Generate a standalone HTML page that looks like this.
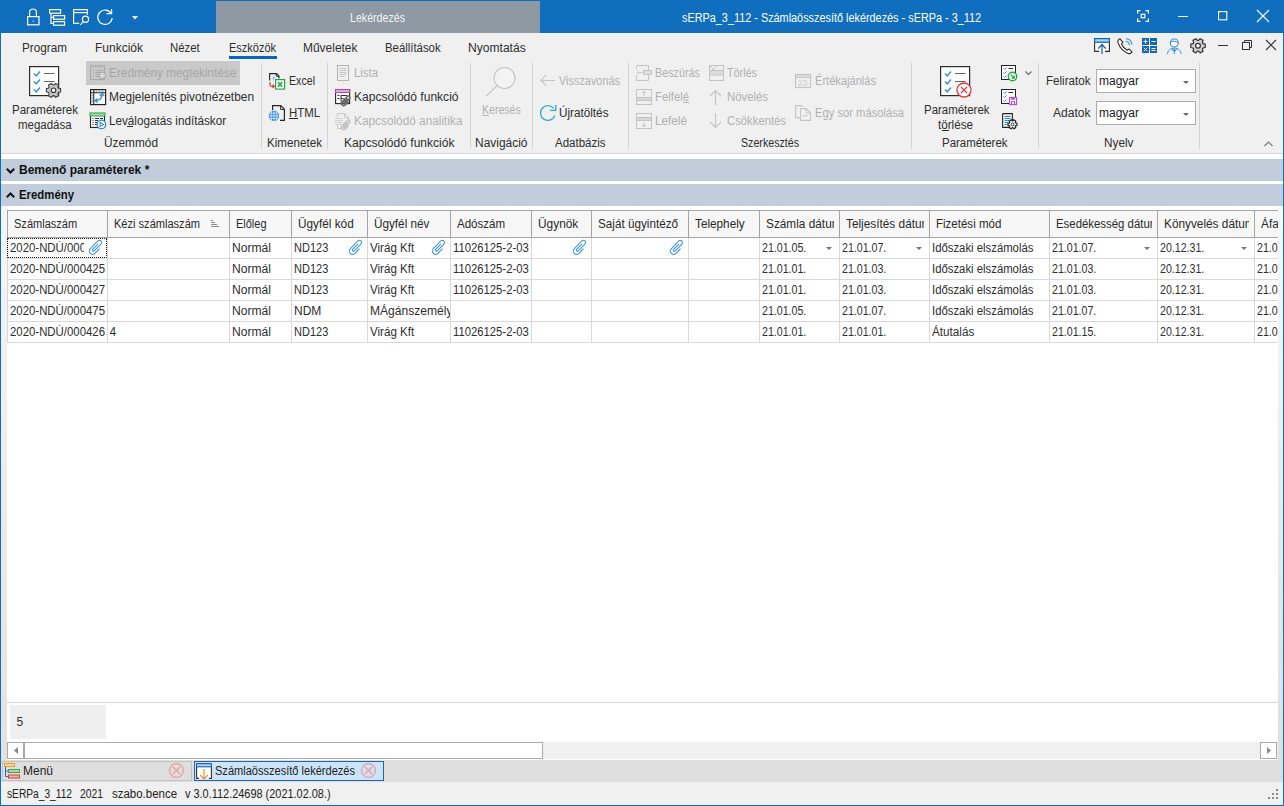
<!DOCTYPE html><html><head><meta charset="utf-8"><style>
html,body{margin:0;padding:0;}
body{width:1284px;height:806px;position:relative;overflow:hidden;background:#f0f0f0;font-family:"Liberation Sans",sans-serif;}
.t{position:absolute;white-space:nowrap;line-height:14px;font-size:12px;}
svg{overflow:visible}
</style></head><body>
<div style="position:absolute;left:0px;top:0px;width:1284px;height:806px;background:#106ebe"></div>
<div style="position:absolute;left:1px;top:33px;width:1282px;height:772px;background:#f0f0f0"></div>
<div style="position:absolute;left:216px;top:1px;width:324px;height:32px;background:#8e99a3"></div>
<div class="t" style="left:350px;top:11.0px;font-size:12px;color:#f4f4f4;transform:scaleX(0.8866);transform-origin:0 0;">Lekérdezés</div>
<div class="t" style="left:682px;top:11.0px;font-size:12px;color:#ffffff;transform:scaleX(0.9052);transform-origin:0 0;">sERPa_3_112 - Számlaösszesítő lekérdezés - sERPa - 3_112</div>
<svg style="position:absolute;left:27px;top:8px;" width="13" height="18" viewBox="0 0 13 18"><path d="M2.6 8.6V4.6a3.4 3.6 0 0 1 6.8 0V8.6" fill="none" stroke="#ffffff" stroke-width="1.2"/><rect x="0.6" y="8.6" width="11.4" height="8.2" fill="none" stroke="#ffffff" stroke-width="1.2"/><rect x="5.6" y="12.6" width="1.4" height="1.4" fill="#9cc3ea"/></svg>
<svg style="position:absolute;left:49px;top:9px;" width="17" height="17" viewBox="0 0 17 17"><rect x="0.6" y="0.6" width="11" height="3.6" fill="none" stroke="#ffffff" stroke-width="1.2"/><rect x="4.6" y="6.6" width="11" height="3.6" fill="none" stroke="#ffffff" stroke-width="1.2"/><rect x="4.6" y="12.6" width="11" height="3.6" fill="none" stroke="#ffffff" stroke-width="1.2"/><path d="M2 4.5V14.4H4.6M2 8.4H4.6" fill="none" stroke="#ffffff" stroke-width="1.2"/></svg>
<svg style="position:absolute;left:73px;top:9px;" width="17" height="18" viewBox="0 0 17 18"><path d="M6.2 14.4H0.6V0.6H14.4V5.8" fill="none" stroke="#ffffff" stroke-width="1.2"/><path d="M0.6 3.6H14.4" stroke="#ffffff" stroke-width="1.2"/><circle cx="12.5" cy="10.2" r="3.1" fill="none" stroke="#ffffff" stroke-width="1.2"/><path d="M10.3 12.6L7.2 16" stroke="#ffffff" stroke-width="1.1"/></svg>
<svg style="position:absolute;left:97px;top:9px;" width="17" height="17" viewBox="0 0 17 17"><path d="M14.2 4.5A7.2 7.2 0 1 0 15.2 9" fill="none" stroke="#ffffff" stroke-width="1.2"/><path d="M9.5 4.6H14.6V0" fill="none" stroke="#ffffff" stroke-width="1.2"/></svg>
<svg style="position:absolute;left:132px;top:16px;" width="7" height="4" viewBox="0 0 7 4"><path d="M0 0H6L3 3.5Z" fill="#ffffff"/></svg>
<svg style="position:absolute;left:1137px;top:10px;" width="12" height="12" viewBox="0 0 12 12"><path d="M0.6 3.5V0.6H3.5M8.5 0.6H11.4V3.5M11.4 8.5V11.4H8.5M3.5 11.4H0.6V8.5" fill="none" stroke="#ffffff" stroke-width="1.2"/><rect x="4.2" y="4.2" width="3.6" height="3.6" fill="none" stroke="#ffffff" stroke-width="1.2"/></svg>
<div style="position:absolute;left:1178px;top:16px;width:10px;height:1px;background:#ffffff"></div>
<svg style="position:absolute;left:1218px;top:11px;" width="10" height="10" viewBox="0 0 10 10"><rect x="0.6" y="0.6" width="8.2" height="8.2" fill="none" stroke="#ffffff" stroke-width="1.1"/></svg>
<svg style="position:absolute;left:1257px;top:10px;" width="12" height="12" viewBox="0 0 12 12"><path d="M0 0L12 12M12 0L0 12" stroke="#ffffff" stroke-width="1.1"/></svg>
<div class="t" style="left:22px;top:41.0px;font-size:12px;color:#2e2e2e;transform:scaleX(0.9779);transform-origin:0 0;">Program</div>
<div class="t" style="left:95px;top:41.0px;font-size:12px;color:#2e2e2e;transform:scaleX(0.9997);transform-origin:0 0;">Funkciók</div>
<div class="t" style="left:170px;top:41.0px;font-size:12px;color:#2e2e2e;transform:scaleX(0.9444);transform-origin:0 0;">Nézet</div>
<div class="t" style="left:229px;top:41.0px;font-size:12px;color:#2e2e2e;transform:scaleX(0.9154);transform-origin:0 0;">Eszközök</div>
<div class="t" style="left:303px;top:41.0px;font-size:12px;color:#2e2e2e;transform:scaleX(0.9966);transform-origin:0 0;">Műveletek</div>
<div class="t" style="left:385px;top:41.0px;font-size:12px;color:#2e2e2e;transform:scaleX(0.9474);transform-origin:0 0;">Beállítások</div>
<div class="t" style="left:468px;top:41.0px;font-size:12px;color:#2e2e2e;transform:scaleX(1.0062);transform-origin:0 0;">Nyomtatás</div>
<div style="position:absolute;left:229px;top:56px;width:48px;height:3px;background:#0864c0"></div>
<svg style="position:absolute;left:1094px;top:38px;" width="17" height="17" viewBox="0 0 17 17"><path d="M5 13.4H0.6V1H15.4V13.4H11" fill="#fff" stroke="#2b2b2b" stroke-width="1.1"/><rect x="0.6" y="0.6" width="14.8" height="3.6" fill="#a7d8f7" stroke="#0f5fb8" stroke-width="1.2"/><path d="M8 16V6.5M4.2 10.6L8 6.5L11.8 10.6" fill="none" stroke="#0f5fb8" stroke-width="1.2"/></svg>
<svg style="position:absolute;left:1117px;top:38px;" width="17" height="17" viewBox="0 0 17 17"><path d="M3 0.8C1.6 1.4 0.4 2.8 1.1 4.9C2.8 9.6 6.2 13.4 11 15.4C12.6 16 14.2 15.2 14.9 13.9L12.2 11L10.2 12.2C7.9 10.9 5.6 8.6 4.5 6.3L5.9 4.3Z" fill="#fff" stroke="#2b2b2b" stroke-width="1.1" stroke-linejoin="round"/><path d="M8.6 3.2A4.2 4.2 0 0 1 12.4 7.2M9 0.8A6.6 6.6 0 0 1 15 6.6" fill="none" stroke="#2e8fd6" stroke-width="1.1"/></svg>
<svg style="position:absolute;left:1142px;top:38px;" width="15" height="15" viewBox="0 0 15 15"><rect x="0" y="0" width="7" height="7" fill="#1565c0"/><rect x="8" y="0" width="7" height="7" fill="#1565c0"/><rect x="0" y="8" width="7" height="7" fill="#1565c0"/><rect x="8" y="8" width="7" height="7" fill="#1565c0"/><path d="M1.5 3.5H5.5M3.5 1.5V5.5M9.5 3.5H13.5M1.8 9.8L5.2 13.2M5.2 9.8L1.8 13.2M9.5 10.5H13.5M9.5 12.5H13.5" stroke="#fff" stroke-width="1"/></svg>
<svg style="position:absolute;left:1167px;top:38px;" width="15" height="17" viewBox="0 0 15 17"><circle cx="7.3" cy="5" r="4" fill="#fff" stroke="#2e8fd6" stroke-width="1.1"/><path d="M3.6 3.8C5.5 2.6 8.5 3.4 11 4.4" fill="none" stroke="#2e8fd6" stroke-width="1"/><path d="M0.5 16C1 12 3.5 10.2 7.3 10.2C11.1 10.2 13.6 12 14.1 16M7.3 11V16M5.2 10.8L6.3 13.2L7.3 11.6L8.3 13.2L9.4 10.8" fill="none" stroke="#2e8fd6" stroke-width="1"/></svg>
<svg style="position:absolute;left:1190px;top:38px;" width="17" height="17" viewBox="0 0 17 17"><path d="M12.93 5.60 L15.21 6.14 L15.21 9.46 L12.93 10.00 L12.37 10.97 L13.05 13.21 L10.16 14.88 L8.56 13.17 L7.44 13.17 L5.84 14.88 L2.95 13.21 L3.63 10.97 L3.07 10.00 L0.79 9.46 L0.79 6.14 L3.07 5.60 L3.63 4.63 L2.95 2.39 L5.84 0.72 L7.44 2.43 L8.56 2.43 L10.16 0.72 L13.05 2.39 L12.37 4.63Z" fill="#d0d0d0" stroke="#333" stroke-width="1.2" stroke-linejoin="round"/><circle cx="8" cy="7.8" r="2.4" fill="#fff" stroke="#333" stroke-width="1.2"/></svg>
<div style="position:absolute;left:1218px;top:45px;width:10px;height:1px;background:#333"></div>
<svg style="position:absolute;left:1242px;top:40px;" width="11" height="10" viewBox="0 0 11 10"><rect x="0.5" y="2.5" width="7" height="7" fill="none" stroke="#333" stroke-width="1"/><path d="M2.5 2.5V0.5H9.5V7.5H7.5" fill="none" stroke="#333" stroke-width="1"/></svg>
<svg style="position:absolute;left:1266px;top:40px;" width="10" height="10" viewBox="0 0 10 10"><path d="M0 0L10 10M10 0L0 10" stroke="#333" stroke-width="1.1"/></svg>
<div style="position:absolute;left:261px;top:63px;width:1px;height:86px;background:#d4d4d4"></div>
<div style="position:absolute;left:327px;top:63px;width:1px;height:86px;background:#d4d4d4"></div>
<div style="position:absolute;left:470px;top:63px;width:1px;height:86px;background:#d4d4d4"></div>
<div style="position:absolute;left:532px;top:63px;width:1px;height:86px;background:#d4d4d4"></div>
<div style="position:absolute;left:628px;top:63px;width:1px;height:86px;background:#d4d4d4"></div>
<div style="position:absolute;left:911px;top:63px;width:1px;height:86px;background:#d4d4d4"></div>
<div style="position:absolute;left:1038px;top:63px;width:1px;height:86px;background:#d4d4d4"></div>
<div style="position:absolute;left:1199px;top:63px;width:1px;height:86px;background:#d4d4d4"></div>
<div style="position:absolute;left:1px;top:153px;width:1282px;height:1px;background:#d9d9d9"></div>
<div class="t" style="left:104px;top:136.0px;font-size:12px;color:#2e2e2e;transform:scaleX(0.9874);transform-origin:0 0;">Üzemmód</div>
<div class="t" style="left:266.5px;top:136.0px;font-size:12px;color:#2e2e2e;transform:scaleX(0.9702);transform-origin:0 0;">Kimenetek</div>
<div class="t" style="left:343.5px;top:136.0px;font-size:12px;color:#2e2e2e;transform:scaleX(1.0041);transform-origin:0 0;">Kapcsolódó funkciók</div>
<div class="t" style="left:475px;top:136.0px;font-size:12px;color:#2e2e2e;transform:scaleX(0.9961);transform-origin:0 0;">Navigáció</div>
<div class="t" style="left:555px;top:136.0px;font-size:12px;color:#2e2e2e;transform:scaleX(0.9585);transform-origin:0 0;">Adatbázis</div>
<div class="t" style="left:741px;top:136.0px;font-size:12px;color:#2e2e2e;transform:scaleX(0.8876);transform-origin:0 0;">Szerkesztés</div>
<div class="t" style="left:942px;top:136.0px;font-size:12px;color:#2e2e2e;transform:scaleX(0.9536);transform-origin:0 0;">Paraméterek</div>
<div class="t" style="left:1104px;top:136.0px;font-size:12px;color:#2e2e2e;transform:scaleX(0.9828);transform-origin:0 0;">Nyelv</div>
<svg style="position:absolute;left:29px;top:66px;" width="31" height="31" viewBox="0 0 31 31"><rect x="0.6" y="0.6" width="29" height="29" fill="#fff" stroke="#2b2b2b" stroke-width="1.2"/><path d="M5 7.5L7.3 9.8L11 5.5M5 15.5L7.3 17.8L11 13.5M5 23.5L7.3 25.8L11 21.5" fill="none" stroke="#3a98d8" stroke-width="1.5"/><path d="M15 7.5H25.5M15 15.5H25.5" stroke="#666" stroke-width="1.1"/></svg>
<svg style="position:absolute;left:45px;top:82px;" width="18" height="18" viewBox="0 0 18 18"><path d="M13.43 6.10 L15.61 6.66 L15.61 9.94 L13.43 10.50 L12.87 11.47 L13.48 13.64 L10.63 15.28 L9.06 13.67 L7.94 13.67 L6.37 15.28 L3.52 13.64 L4.13 11.47 L3.57 10.50 L1.39 9.94 L1.39 6.66 L3.57 6.10 L4.13 5.13 L3.52 2.96 L6.37 1.32 L7.94 2.93 L9.06 2.93 L10.63 1.32 L13.48 2.96 L12.87 5.13Z" fill="#c8c8c8" stroke="#3a3a3a" stroke-width="1.1"/><circle cx="8.5" cy="8.3" r="2.3" fill="#fff" stroke="#3a3a3a" stroke-width="1.2"/></svg>
<div class="t" style="left:12px;top:103.0px;font-size:12px;color:#2e2e2e;transform:scaleX(0.9609);transform-origin:0 0;">Paraméterek</div>
<div class="t" style="left:18px;top:118.0px;font-size:12px;color:#2e2e2e;transform:scaleX(0.9566);transform-origin:0 0;">megadása</div>
<div style="position:absolute;left:86px;top:61px;width:154px;height:24px;background:#c9c9c9"></div>
<svg style="position:absolute;left:90px;top:65px;" width="16" height="17" viewBox="0 0 16 17"><rect x="0.5" y="0.5" width="14" height="14" fill="none" stroke="#a8a8a8"/><rect x="0.5" y="0.5" width="14" height="2" fill="#b8b8b8"/><path d="M3 5.5H4M3 7.5H4M3 9.5H4M3 11.5H4M5.5 5.5H13M5.5 7.5H11M5.5 9.5H9M5.5 11.5H9" stroke="#a8a8a8"/><circle cx="12.3" cy="10.4" r="3.2" fill="#d6d6d6" stroke="#a8a8a8"/><path d="M10.2 12.6L7.6 15.4" stroke="#b4b4b4" stroke-width="1.1"/></svg>
<div class="t" style="left:109px;top:66.0px;font-size:12px;color:#a6a6a6;transform:scaleX(0.9855);transform-origin:0 0;">Eredmény megtekintése</div>
<svg style="position:absolute;left:90px;top:89px;" width="17" height="17" viewBox="0 0 17 17"><rect x="0.6" y="0.6" width="15" height="15" fill="#fff" stroke="#222" stroke-width="1.2"/><path d="M1 3.8H15M3.8 1V15" stroke="#222" stroke-width="1.1"/><path d="M5.5 2.2H7.5M8.5 2.2H10.5M11.5 2.2H13.5M2.2 5.5V7.5M2.2 8.5V10.5M2.2 11.5V13.5" stroke="#9a9a9a" stroke-width="1.2"/><path d="M5.6 11.6C8.5 11.6 11.5 10 12 6" fill="none" stroke="#2e8fd6" stroke-width="1.3"/><path d="M9.8 7L12 4.5L14.2 7M7.5 9.6L5.2 11.6L7.5 13.6" fill="none" stroke="#2e8fd6" stroke-width="1.3"/></svg>
<div class="t" style="left:109px;top:90.0px;font-size:12px;color:#2e2e2e;transform:scaleX(0.9927);transform-origin:0 0;">Megjelenítés pivotnézetben</div>
<svg style="position:absolute;left:90px;top:113px;" width="17" height="17" viewBox="0 0 17 17"><rect x="0.5" y="0.5" width="14" height="14" fill="#fff" stroke="#262626" stroke-width="1.1"/><rect x="0" y="0" width="15" height="3" fill="#9fdcaa" stroke="#27a844" stroke-width="1"/><path d="M2.5 5.5H3.5M2.5 7.5H3.5M2.5 9.5H3.5M2.5 11.5H3.5M5 5.5H9M10 5.5H13M5 7.5H8M5 9.5H7M5 11.5H7" stroke="#333"/><circle cx="11.4" cy="11.4" r="4.3" fill="#fff" stroke="#2e8fd6" stroke-width="1.3"/><path d="M10.1 9.2V13.6L13.6 11.4Z" fill="none" stroke="#2e8fd6" stroke-width="1.1"/></svg>
<div class="t" style="left:109px;top:114.0px;font-size:12px;color:#2e2e2e;transform:scaleX(0.9746);transform-origin:0 0;">Leválogatás indításkor</div>
<div style="position:absolute;left:127px;top:126px;width:6px;height:1px;background:#2e2e2e"></div>
<svg style="position:absolute;left:269px;top:72px;" width="17" height="18" viewBox="0 0 17 18"><path d="M0.6 8.5V1.6H7.5L10 4.1V6.5" fill="none" stroke="#262626" stroke-width="1.1"/><path d="M7.3 1.6V4.3H10" fill="none" stroke="#262626" stroke-width="0.9"/><path d="M3.5 5.2H6M4.7 5.2V8.2M3.5 6.6H5.8" stroke="#8cc0ee" stroke-width="1"/><rect x="6.6" y="7.6" width="9" height="9.5" fill="#fff" stroke="#21a84a" stroke-width="1.2"/><path d="M9 10L13.2 14.8M13.2 10L9 14.8" stroke="#21a84a" stroke-width="1.5"/><path d="M1 10V12.5C1 13.6 1.8 14.3 3 14.3H5M3.6 12.6L5.3 14.3L3.6 16" fill="none" stroke="#e53935" stroke-width="1.2"/></svg>
<div class="t" style="left:288.5px;top:74.0px;font-size:12px;color:#2e2e2e;transform:scaleX(0.8860);transform-origin:0 0;">Excel</div>
<svg style="position:absolute;left:268px;top:105px;" width="18" height="17" viewBox="0 0 18 17"><path d="M4.6 5V0.6H12.8L16.4 4.2V15.4H12" fill="none" stroke="#262626" stroke-width="1.2"/><path d="M12.6 0.6V4.4H16.4" fill="none" stroke="#262626" stroke-width="1"/><circle cx="6" cy="10.8" r="5.2" fill="#2a88d4"/><path d="M0.8 10.8H11.2M6 5.6V16M1.8 8.2H10.2M1.8 13.4H10.2M3.6 6.2C2.9 9 2.9 12.6 3.6 15.4M8.4 6.2C9.1 9 9.1 12.6 8.4 15.4" fill="none" stroke="#fff" stroke-width="0.75" opacity="0.9"/></svg>
<div class="t" style="left:288.5px;top:106.0px;font-size:12px;color:#2e2e2e;transform:scaleX(0.9488);transform-origin:0 0;">HTML</div>
<div style="position:absolute;left:289px;top:118px;width:9px;height:1px;background:#262626"></div>
<svg style="position:absolute;left:337px;top:65px;" width="13" height="17" viewBox="0 0 13 17"><rect x="0.5" y="0.5" width="11" height="15" fill="none" stroke="#b4b4b4"/><path d="M2.5 3.5H9.5M2.5 5.5H9.5M2.5 7.5H9.5M2.5 9.5H9.5M2.5 11.5H7.5" stroke="#c4c4c4"/></svg>
<div class="t" style="left:354.3px;top:66.0px;font-size:12px;color:#b0b0b0;transform:scaleX(0.9470);transform-origin:0 0;">Lista</div>
<svg style="position:absolute;left:335px;top:89px;" width="17" height="17" viewBox="0 0 17 17"><rect x="0.6" y="0.6" width="14" height="14" fill="#fff" stroke="#262626" stroke-width="1.1"/><rect x="0.5" y="0.5" width="14.2" height="3" fill="#dcb0dc" stroke="#a24ea8" stroke-width="1"/><path d="M2.5 6.5H4.5M2.5 9.5H4.5M6 6.5H12M6 9.5H8.5M6 6.5V12.5H8" fill="none" stroke="#333" stroke-width="1"/><g transform="translate(11.4,11.6) rotate(45) scale(0.75)"><path d="M3 -1V5A3 3 0 0 1 -3 5V-4.8A2 2 0 0 1 1 -4.8V3.8A1 1 0 0 1 -1 3.8V-3" fill="none" stroke="#6a6a6a" stroke-width="2.2"/></g></svg>
<div class="t" style="left:354.3px;top:90.0px;font-size:12px;color:#2e2e2e;transform:scaleX(1.0044);transform-origin:0 0;">Kapcsolódó funkció</div>
<svg style="position:absolute;left:335px;top:113px;" width="17" height="17" viewBox="0 0 17 17"><path d="M2.5 4V0.6H9.5L13.5 4.6V8M2.5 12V15.4H6" fill="none" stroke="#c8c8c8" stroke-width="1"/><path d="M9.5 0.6V4.6H13.5" fill="none" stroke="#c8c8c8"/><path d="M0 5.5H8M0 7.5H8M0 9.5H8M0 11.5H6" stroke="#d0d0d0"/><g transform="translate(11.4,11.6) rotate(45) scale(0.75)"><path d="M3 -1V5A3 3 0 0 1 -3 5V-4.8A2 2 0 0 1 1 -4.8V3.8A1 1 0 0 1 -1 3.8V-3" fill="none" stroke="#c4c4c4" stroke-width="2.2"/></g></svg>
<div class="t" style="left:354.3px;top:114.0px;font-size:12px;color:#b0b0b0;transform:scaleX(0.9858);transform-origin:0 0;">Kapcsolódó analitika</div>
<svg style="position:absolute;left:485px;top:66px;" width="31" height="31" viewBox="0 0 31 31"><circle cx="19.5" cy="12" r="10.5" fill="#f3f3f3" stroke="#c6c6c6" stroke-width="1.15"/><path d="M12.2 19.5L1.2 30.2" stroke="#c6c6c6" stroke-width="1.15"/></svg>
<div class="t" style="left:482px;top:103.0px;font-size:12px;color:#b0b0b0;transform:scaleX(0.8792);transform-origin:0 0;">Keresés</div>
<div style="position:absolute;left:482px;top:115px;width:7px;height:1px;background:#b8b8b8"></div>
<svg style="position:absolute;left:540px;top:72px;" width="16" height="16" viewBox="0 0 16 16"><path d="M15 8.4H0.8M6.3 2.9L0.8 8.4L6.3 13.9" fill="none" stroke="#c4c4c4" stroke-width="1.05"/></svg>
<div class="t" style="left:559.4px;top:74.0px;font-size:12px;color:#b0b0b0;transform:scaleX(0.9085);transform-origin:0 0;">Visszavonás</div>
<svg style="position:absolute;left:540px;top:104px;" width="17" height="17" viewBox="0 0 17 17"><path d="M13.57 4.24A7.4 7.4 0 1 0 14.85 11.53" fill="none" stroke="#2aaec8" stroke-width="1.35"/><path d="M10 6.4H15.8V1" fill="none" stroke="#2aaec8" stroke-width="1.35"/></svg>
<div class="t" style="left:559.4px;top:106.0px;font-size:12px;color:#2e2e2e;transform:scaleX(0.9766);transform-origin:0 0;">Újratöltés</div>
<svg style="position:absolute;left:636px;top:65px;" width="17" height="17" viewBox="0 0 17 17"><path d="M0.5 4V0.5H12.5V5M0.5 10V15.5H12.5V10" fill="none" stroke="#c4c4c4"/><rect x="7.5" y="5.5" width="8" height="4" fill="#dedede" stroke="#c4c4c4"/><path d="M1 7.5H7M3 5.5L1 7.5L3 9.5" fill="none" stroke="#d0d0d0"/></svg>
<div class="t" style="left:655.3px;top:66.0px;font-size:12px;color:#b0b0b0;transform:scaleX(0.8997);transform-origin:0 0;">Beszúrás</div>
<svg style="position:absolute;left:636px;top:89px;" width="17" height="17" viewBox="0 0 17 17"><rect x="0.5" y="0.5" width="15" height="15" fill="none" stroke="#c4c4c4"/><rect x="0.5" y="8.5" width="15" height="3" fill="#d8d8d8" stroke="#c4c4c4"/><path d="M8 7V2M6 4L8 2L10 4" fill="none" stroke="#c4c4c4"/></svg>
<div class="t" style="left:655.3px;top:90.0px;font-size:12px;color:#b0b0b0;transform:scaleX(0.9440);transform-origin:0 0;">Felfelé</div>
<div style="position:absolute;left:683px;top:102px;width:6px;height:1px;background:#b8b8b8"></div>
<svg style="position:absolute;left:636px;top:113px;" width="17" height="17" viewBox="0 0 17 17"><rect x="0.5" y="0.5" width="15" height="15" fill="none" stroke="#c4c4c4"/><rect x="0.5" y="4.5" width="15" height="3" fill="#d8d8d8" stroke="#c4c4c4"/><path d="M8 9V14M6 12L8 14L10 12" fill="none" stroke="#c4c4c4"/></svg>
<div class="t" style="left:655.3px;top:114.0px;font-size:12px;color:#b0b0b0;transform:scaleX(0.9790);transform-origin:0 0;">Lefelé</div>
<svg style="position:absolute;left:709px;top:65px;" width="16" height="17" viewBox="0 0 16 17"><rect x="0.5" y="0.5" width="14" height="15" fill="none" stroke="#c4c4c4"/><rect x="0.5" y="5.5" width="14" height="4.5" fill="#dedede" stroke="#c4c4c4"/><path d="M0.5 0.5L8 8M8 0.5L0.5 8" stroke="#c8c8c8"/></svg>
<div class="t" style="left:727.4px;top:66.0px;font-size:12px;color:#b0b0b0;transform:scaleX(0.8997);transform-origin:0 0;">Törlés</div>
<svg style="position:absolute;left:709px;top:89px;" width="16" height="17" viewBox="0 0 16 17"><path d="M6.5 16V1.5M1 7L6.5 1.5L12 7" fill="none" stroke="#c4c4c4" stroke-width="1.1"/></svg>
<div class="t" style="left:727.4px;top:90.0px;font-size:12px;color:#b0b0b0;transform:scaleX(0.9456);transform-origin:0 0;">Növelés</div>
<svg style="position:absolute;left:709px;top:113px;" width="16" height="17" viewBox="0 0 16 17"><path d="M6.5 0V14.5M1 9L6.5 14.5L12 9" fill="none" stroke="#c4c4c4" stroke-width="1.1"/></svg>
<div class="t" style="left:727.4px;top:114.0px;font-size:12px;color:#b0b0b0;transform:scaleX(0.9412);transform-origin:0 0;">Csökkentés</div>
<svg style="position:absolute;left:795px;top:74px;" width="17" height="15" viewBox="0 0 17 15"><rect x="0.5" y="0.5" width="15" height="13" fill="none" stroke="#c4c4c4" stroke-width="1.1"/><rect x="0.5" y="0.5" width="15" height="2.8" fill="#dcdcdc" stroke="#c4c4c4" stroke-width="1"/><text x="2.6" y="12" font-size="9" font-family="Liberation Sans" fill="#cdcdcd">23</text></svg>
<div class="t" style="left:814.5px;top:74.0px;font-size:12px;color:#b0b0b0;transform:scaleX(0.9238);transform-origin:0 0;">Értékajánlás</div>
<svg style="position:absolute;left:795px;top:105px;" width="17" height="17" viewBox="0 0 17 17"><path d="M5 12.6H0.6V0.6H6.5L7.8 1.8" fill="none" stroke="#c4c4c4" stroke-width="1.1"/><path d="M5.6 3.6H11L15.4 8V15.4H5.6Z" fill="#f3f3f3" stroke="#c4c4c4" stroke-width="1.1"/><path d="M11 3.6V8H15.4" fill="none" stroke="#c4c4c4"/><path d="M7.5 10.8H13" stroke="#c4c4c4"/></svg>
<div class="t" style="left:814.5px;top:106.0px;font-size:12px;color:#b0b0b0;transform:scaleX(0.9333);transform-origin:0 0;">Egy sor másolása</div>
<svg style="position:absolute;left:940px;top:66px;" width="31" height="31" viewBox="0 0 31 31"><rect x="0.6" y="0.6" width="29" height="29" fill="#fff" stroke="#2b2b2b" stroke-width="1.2"/><path d="M5 7.5L7.3 9.8L11 5.5M5 15.5L7.3 17.8L11 13.5M5 23.5L7.3 25.8L11 21.5" fill="none" stroke="#3a98d8" stroke-width="1.5"/><path d="M15 7.5H25.5M15 15.5H25.5" stroke="#666" stroke-width="1.1"/></svg>
<svg style="position:absolute;left:956px;top:82px;" width="16" height="16" viewBox="0 0 16 16"><circle cx="8" cy="8" r="7" fill="#fff" stroke="#e53935" stroke-width="1.3"/><path d="M5 5L11 11M11 5L5 11" stroke="#e53935" stroke-width="1.3"/></svg>
<div class="t" style="left:923.5px;top:103.0px;font-size:12px;color:#2e2e2e;transform:scaleX(0.9536);transform-origin:0 0;">Paraméterek</div>
<div class="t" style="left:938px;top:117.5px;font-size:12px;color:#2e2e2e;transform:scaleX(0.9718);transform-origin:0 0;">törlése</div>
<div style="position:absolute;left:942px;top:130px;width:7px;height:1px;background:#2e2e2e"></div>
<svg style="position:absolute;left:1001px;top:65px;" width="17" height="17" viewBox="0 0 17 17"><rect x="0.5" y="0.5" width="14" height="14" fill="#fff" stroke="#262626"/><path d="M2.5 3.5L3.5 4.5L5.5 2.5M2.5 7.5L3.5 8.5L5.5 6.5M2.5 11.5L3.5 12.5L5.5 10.5" fill="none" stroke="#2e8fd6" stroke-width="1"/><path d="M7.5 3.5H12" stroke="#333"/><circle cx="11.5" cy="11.5" r="4.2" fill="#fff" stroke="#21a84a" stroke-width="1.4"/><path d="M9.6 9.6L13 13M13.2 10.6V13.2H10.6" fill="none" stroke="#21a84a" stroke-width="1.3"/></svg>
<svg style="position:absolute;left:1001px;top:89px;" width="17" height="17" viewBox="0 0 17 17"><rect x="0.5" y="0.5" width="14" height="14" fill="#fff" stroke="#262626"/><path d="M2.5 3.5L3.5 4.5L5.5 2.5M2.5 7.5L3.5 8.5L5.5 6.5M2.5 11.5L3.5 12.5L5.5 10.5" fill="none" stroke="#2e8fd6" stroke-width="1"/><path d="M7.5 3.5H12" stroke="#333"/><rect x="8.5" y="8.5" width="7" height="7" fill="#fff" stroke="#b455c8" stroke-width="1.3"/><rect x="10.2" y="8.5" width="3.6" height="2.3" fill="#b455c8"/><rect x="10.5" y="12.6" width="3" height="2.9" fill="none" stroke="#b455c8" stroke-width="1"/></svg>
<svg style="position:absolute;left:1002px;top:113px;" width="17" height="17" viewBox="0 0 17 17"><path d="M0.6 0.6H10.4V7M7 14.4H0.6V0.6" fill="none" stroke="#262626" stroke-width="1.1"/><path d="M2.5 3.5H8.5M2.5 5.5H8.5M2.5 7.5H7M2.5 9.5H6M2.5 11.5H5" stroke="#2e8fd6"/><path d="M13.47 9.85 L14.96 10.19 L14.96 12.41 L13.47 12.75 L13.24 13.15 L13.70 14.61 L11.77 15.72 L10.73 14.59 L10.27 14.59 L9.23 15.72 L7.30 14.61 L7.76 13.15 L7.53 12.75 L6.04 12.41 L6.04 10.19 L7.53 9.85 L7.76 9.45 L7.30 7.99 L9.23 6.88 L10.27 8.01 L10.73 8.01 L11.77 6.88 L13.70 7.99 L13.24 9.45Z" fill="#fff" stroke="#262626" stroke-width="1.2"/><circle cx="10.5" cy="11.3" r="1.4" fill="#fff" stroke="#262626" stroke-width="0.9"/></svg>
<svg style="position:absolute;left:1025px;top:71px;" width="7" height="4" viewBox="0 0 7 4"><path d="M0.5 0.5L3.5 3.5L6.5 0.5" fill="none" stroke="#6a6a6a" stroke-width="1.1"/></svg>
<div class="t" style="left:1046.3px;top:74.0px;font-size:12px;color:#2e2e2e;transform:scaleX(0.9671);transform-origin:0 0;">Feliratok</div>
<div class="t" style="left:1053.4px;top:106.0px;font-size:12px;color:#2e2e2e;transform:scaleX(1.0042);transform-origin:0 0;">Adatok</div>
<div style="position:absolute;left:1096px;top:69px;width:100px;height:24px;background:#fff;border:1px solid #acacac;box-sizing:border-box"></div>
<div class="t" style="left:1099.4px;top:73.5px;font-size:12px;color:#202020;transform:scaleX(0.9996);transform-origin:0 0;">magyar</div>
<svg style="position:absolute;left:1183px;top:81px;" width="6" height="3" viewBox="0 0 6 3"><path d="M0 0H6L3 3Z" fill="#6a6a6a"/></svg>
<div style="position:absolute;left:1096px;top:101px;width:100px;height:24px;background:#fff;border:1px solid #acacac;box-sizing:border-box"></div>
<div class="t" style="left:1099.4px;top:105.5px;font-size:12px;color:#202020;transform:scaleX(0.9996);transform-origin:0 0;">magyar</div>
<svg style="position:absolute;left:1183px;top:113px;" width="6" height="3" viewBox="0 0 6 3"><path d="M0 0H6L3 3Z" fill="#6a6a6a"/></svg>
<svg style="position:absolute;left:1264px;top:141px;" width="9" height="5" viewBox="0 0 9 5"><path d="M0.5 5L4.5 1L8.5 5" fill="none" stroke="#777" stroke-width="1.1"/></svg>
<div style="position:absolute;left:1px;top:154px;width:1282px;height:606px;background:#fff"></div>
<div style="position:absolute;left:1px;top:159px;width:1282px;height:22px;background:#c1cdda"></div>
<svg style="position:absolute;left:6px;top:168px;" width="9" height="6" viewBox="0 0 9 6"><path d="M0.8 0.8L4.5 4.5L8.2 0.8" fill="none" stroke="#111" stroke-width="2"/></svg>
<div class="t" style="left:18.7px;top:162.5px;font-size:12px;color:#111;transform:scaleX(1.0019);transform-origin:0 0;font-weight:bold;">Bemenő paraméterek *</div>
<div style="position:absolute;left:1px;top:184px;width:1282px;height:22px;background:#c1cdda"></div>
<svg style="position:absolute;left:6px;top:192px;" width="9" height="6" viewBox="0 0 9 6"><path d="M0.8 5.2L4.5 1.5L8.2 5.2" fill="none" stroke="#111" stroke-width="2"/></svg>
<div class="t" style="left:18.7px;top:187.5px;font-size:12px;color:#111;transform:scaleX(0.9480);transform-origin:0 0;font-weight:bold;">Eredmény</div>
<div style="position:absolute;left:1px;top:206px;width:6px;height:554px;background:linear-gradient(#f6f6f6,#e2e2e2)"></div>
<div style="position:absolute;left:1278px;top:206px;width:5px;height:554px;background:linear-gradient(#f8f8f8,#dedede)"></div>
<div style="position:absolute;left:7px;top:210px;width:1271px;height:140px;overflow:hidden">
<div style="position:absolute;left:0px;top:0px;width:1400px;height:28px;background:#f7f7f7"></div>
<div style="position:absolute;left:0px;top:0px;width:1400px;height:1px;background:#a5a5a5"></div>
<div style="position:absolute;left:0px;top:27px;width:1400px;height:1px;background:#a5a5a5"></div>
<div style="position:absolute;left:0px;top:0px;width:1px;height:28px;background:#a5a5a5"></div>
<div style="position:absolute;left:7px;top:7.0px;width:88px;height:16px;overflow:hidden"><div class="t" style="left:0;top:0;font-size:12px;color:#2a2a2a;transform:scaleX(0.9201);transform-origin:0 0;">Számlaszám</div></div>
<div style="position:absolute;left:100px;top:0px;width:1px;height:28px;background:#a5a5a5"></div>
<div style="position:absolute;left:107px;top:7.0px;width:110px;height:16px;overflow:hidden"><div class="t" style="left:0;top:0;font-size:12px;color:#2a2a2a;transform:scaleX(0.9212);transform-origin:0 0;">Kézi számlaszám</div></div>
<div style="position:absolute;left:222px;top:0px;width:1px;height:28px;background:#a5a5a5"></div>
<div style="position:absolute;left:229px;top:7.0px;width:50px;height:16px;overflow:hidden"><div class="t" style="left:0;top:0;font-size:12px;color:#2a2a2a;transform:scaleX(0.9143);transform-origin:0 0;">Előleg</div></div>
<div style="position:absolute;left:284px;top:0px;width:1px;height:28px;background:#a5a5a5"></div>
<div style="position:absolute;left:291px;top:7.0px;width:64px;height:16px;overflow:hidden"><div class="t" style="left:0;top:0;font-size:12px;color:#2a2a2a;transform:scaleX(0.9826);transform-origin:0 0;">Ügyfél kód</div></div>
<div style="position:absolute;left:360px;top:0px;width:1px;height:28px;background:#a5a5a5"></div>
<div style="position:absolute;left:367px;top:7.0px;width:71px;height:16px;overflow:hidden"><div class="t" style="left:0;top:0;font-size:12px;color:#2a2a2a;transform:scaleX(0.9773);transform-origin:0 0;">Ügyfél név</div></div>
<div style="position:absolute;left:443px;top:0px;width:1px;height:28px;background:#a5a5a5"></div>
<div style="position:absolute;left:450px;top:7.0px;width:69px;height:16px;overflow:hidden"><div class="t" style="left:0;top:0;font-size:12px;color:#2a2a2a;transform:scaleX(0.9617);transform-origin:0 0;">Adószám</div></div>
<div style="position:absolute;left:524px;top:0px;width:1px;height:28px;background:#a5a5a5"></div>
<div style="position:absolute;left:531px;top:7.0px;width:48px;height:16px;overflow:hidden"><div class="t" style="left:0;top:0;font-size:12px;color:#2a2a2a;transform:scaleX(0.9905);transform-origin:0 0;">Ügynök</div></div>
<div style="position:absolute;left:584px;top:0px;width:1px;height:28px;background:#a5a5a5"></div>
<div style="position:absolute;left:591px;top:7.0px;width:85px;height:16px;overflow:hidden"><div class="t" style="left:0;top:0;font-size:12px;color:#2a2a2a;transform:scaleX(0.9752);transform-origin:0 0;">Saját ügyintéző</div></div>
<div style="position:absolute;left:681px;top:0px;width:1px;height:28px;background:#a5a5a5"></div>
<div style="position:absolute;left:688px;top:7.0px;width:59px;height:16px;overflow:hidden"><div class="t" style="left:0;top:0;font-size:12px;color:#2a2a2a;transform:scaleX(0.9802);transform-origin:0 0;">Telephely</div></div>
<div style="position:absolute;left:752px;top:0px;width:1px;height:28px;background:#a5a5a5"></div>
<div style="position:absolute;left:759px;top:7.0px;width:68px;height:16px;overflow:hidden"><div class="t" style="left:0;top:0;font-size:12px;color:#2a2a2a;transform:scaleX(0.9850);transform-origin:0 0;">Számla dátum</div></div>
<div style="position:absolute;left:832px;top:0px;width:1px;height:28px;background:#a5a5a5"></div>
<div style="position:absolute;left:839px;top:7.0px;width:78px;height:16px;overflow:hidden"><div class="t" style="left:0;top:0;font-size:12px;color:#2a2a2a;transform:scaleX(0.9850);transform-origin:0 0;">Teljesítés dátum</div></div>
<div style="position:absolute;left:922px;top:0px;width:1px;height:28px;background:#a5a5a5"></div>
<div style="position:absolute;left:929px;top:7.0px;width:108px;height:16px;overflow:hidden"><div class="t" style="left:0;top:0;font-size:12px;color:#2a2a2a;transform:scaleX(0.9601);transform-origin:0 0;">Fizetési mód</div></div>
<div style="position:absolute;left:1042px;top:0px;width:1px;height:28px;background:#a5a5a5"></div>
<div style="position:absolute;left:1049px;top:7.0px;width:96px;height:16px;overflow:hidden"><div class="t" style="left:0;top:0;font-size:12px;color:#2a2a2a;transform:scaleX(0.9500);transform-origin:0 0;">Esedékesség dátum</div></div>
<div style="position:absolute;left:1150px;top:0px;width:1px;height:28px;background:#a5a5a5"></div>
<div style="position:absolute;left:1157px;top:7.0px;width:85px;height:16px;overflow:hidden"><div class="t" style="left:0;top:0;font-size:12px;color:#2a2a2a;transform:scaleX(0.9850);transform-origin:0 0;">Könyvelés dátum</div></div>
<div style="position:absolute;left:1247px;top:0px;width:1px;height:28px;background:#a5a5a5"></div>
<div style="position:absolute;left:1254px;top:7.0px;width:74px;height:16px;overflow:hidden"><div class="t" style="left:0;top:0;font-size:12px;color:#2a2a2a;transform:scaleX(0.9850);transform-origin:0 0;">Áfa dátum</div></div>
<svg style="position:absolute;left:204px;top:10px;" width="9" height="8" viewBox="0 0 9 8"><path d="M0 0.5H2M0 2.5H4M0 4.5H6M0 6.5H8" stroke="#8a8a8a" stroke-width="1"/></svg>
<div style="position:absolute;left:0px;top:48px;width:1400px;height:1px;background:#d9d9d9"></div>
<div style="position:absolute;left:0px;top:28px;width:1px;height:21px;background:#d9d9d9"></div>
<div style="position:absolute;left:2.5px;top:31.0px;width:97px;height:16px;overflow:hidden"><div class="t" style="left:0;top:0;font-size:12px;color:#2e2e2e;transform:scaleX(0.9494);transform-origin:0 0;">2020-NDÚ/000</div></div>
<div style="position:absolute;left:100px;top:28px;width:1px;height:21px;background:#d9d9d9"></div>
<div style="position:absolute;left:222px;top:28px;width:1px;height:21px;background:#d9d9d9"></div>
<div style="position:absolute;left:224.5px;top:31.0px;width:59px;height:16px;overflow:hidden"><div class="t" style="left:0;top:0;font-size:12px;color:#2e2e2e;transform:scaleX(1.0081);transform-origin:0 0;">Normál</div></div>
<div style="position:absolute;left:284px;top:28px;width:1px;height:21px;background:#d9d9d9"></div>
<div style="position:absolute;left:286.5px;top:31.0px;width:73px;height:16px;overflow:hidden"><div class="t" style="left:0;top:0;font-size:12px;color:#2e2e2e;transform:scaleX(0.9181);transform-origin:0 0;">ND123</div></div>
<div style="position:absolute;left:360px;top:28px;width:1px;height:21px;background:#d9d9d9"></div>
<div style="position:absolute;left:362.5px;top:31.0px;width:80px;height:16px;overflow:hidden"><div class="t" style="left:0;top:0;font-size:12px;color:#2e2e2e;transform:scaleX(0.9655);transform-origin:0 0;">Virág Kft</div></div>
<div style="position:absolute;left:443px;top:28px;width:1px;height:21px;background:#d9d9d9"></div>
<div style="position:absolute;left:445.5px;top:31.0px;width:78px;height:16px;overflow:hidden"><div class="t" style="left:0;top:0;font-size:12px;color:#2e2e2e;transform:scaleX(0.9404);transform-origin:0 0;">11026125-2-03</div></div>
<div style="position:absolute;left:524px;top:28px;width:1px;height:21px;background:#d9d9d9"></div>
<div style="position:absolute;left:584px;top:28px;width:1px;height:21px;background:#d9d9d9"></div>
<div style="position:absolute;left:681px;top:28px;width:1px;height:21px;background:#d9d9d9"></div>
<div style="position:absolute;left:752px;top:28px;width:1px;height:21px;background:#d9d9d9"></div>
<div style="position:absolute;left:754.5px;top:31.0px;width:77px;height:16px;overflow:hidden"><div class="t" style="left:0;top:0;font-size:12px;color:#2e2e2e;transform:scaleX(0.8850);transform-origin:0 0;">21.01.05.</div></div>
<div style="position:absolute;left:832px;top:28px;width:1px;height:21px;background:#d9d9d9"></div>
<div style="position:absolute;left:834.5px;top:31.0px;width:87px;height:16px;overflow:hidden"><div class="t" style="left:0;top:0;font-size:12px;color:#2e2e2e;transform:scaleX(0.8850);transform-origin:0 0;">21.01.07.</div></div>
<div style="position:absolute;left:922px;top:28px;width:1px;height:21px;background:#d9d9d9"></div>
<div style="position:absolute;left:924.5px;top:31.0px;width:117px;height:16px;overflow:hidden"><div class="t" style="left:0;top:0;font-size:12px;color:#2e2e2e;transform:scaleX(0.9444);transform-origin:0 0;">Időszaki elszámolás</div></div>
<div style="position:absolute;left:1042px;top:28px;width:1px;height:21px;background:#d9d9d9"></div>
<div style="position:absolute;left:1044.5px;top:31.0px;width:105px;height:16px;overflow:hidden"><div class="t" style="left:0;top:0;font-size:12px;color:#2e2e2e;transform:scaleX(0.8850);transform-origin:0 0;">21.01.07.</div></div>
<div style="position:absolute;left:1150px;top:28px;width:1px;height:21px;background:#d9d9d9"></div>
<div style="position:absolute;left:1152.5px;top:31.0px;width:94px;height:16px;overflow:hidden"><div class="t" style="left:0;top:0;font-size:12px;color:#2e2e2e;transform:scaleX(0.8850);transform-origin:0 0;">20.12.31.</div></div>
<div style="position:absolute;left:1247px;top:28px;width:1px;height:21px;background:#d9d9d9"></div>
<div style="position:absolute;left:1249.5px;top:31.0px;width:83px;height:16px;overflow:hidden"><div class="t" style="left:0;top:0;font-size:12px;color:#2e2e2e;transform:scaleX(0.8850);transform-origin:0 0;">21.01.07.</div></div>
<div style="position:absolute;left:0px;top:69px;width:1400px;height:1px;background:#d9d9d9"></div>
<div style="position:absolute;left:0px;top:49px;width:1px;height:21px;background:#d9d9d9"></div>
<div style="position:absolute;left:2.5px;top:52.0px;width:97px;height:16px;overflow:hidden"><div class="t" style="left:0;top:0;font-size:12px;color:#2e2e2e;transform:scaleX(0.9494);transform-origin:0 0;">2020-NDÚ/000425</div></div>
<div style="position:absolute;left:100px;top:49px;width:1px;height:21px;background:#d9d9d9"></div>
<div style="position:absolute;left:222px;top:49px;width:1px;height:21px;background:#d9d9d9"></div>
<div style="position:absolute;left:224.5px;top:52.0px;width:59px;height:16px;overflow:hidden"><div class="t" style="left:0;top:0;font-size:12px;color:#2e2e2e;transform:scaleX(1.0081);transform-origin:0 0;">Normál</div></div>
<div style="position:absolute;left:284px;top:49px;width:1px;height:21px;background:#d9d9d9"></div>
<div style="position:absolute;left:286.5px;top:52.0px;width:73px;height:16px;overflow:hidden"><div class="t" style="left:0;top:0;font-size:12px;color:#2e2e2e;transform:scaleX(0.9181);transform-origin:0 0;">ND123</div></div>
<div style="position:absolute;left:360px;top:49px;width:1px;height:21px;background:#d9d9d9"></div>
<div style="position:absolute;left:362.5px;top:52.0px;width:80px;height:16px;overflow:hidden"><div class="t" style="left:0;top:0;font-size:12px;color:#2e2e2e;transform:scaleX(0.9655);transform-origin:0 0;">Virág Kft</div></div>
<div style="position:absolute;left:443px;top:49px;width:1px;height:21px;background:#d9d9d9"></div>
<div style="position:absolute;left:445.5px;top:52.0px;width:78px;height:16px;overflow:hidden"><div class="t" style="left:0;top:0;font-size:12px;color:#2e2e2e;transform:scaleX(0.9404);transform-origin:0 0;">11026125-2-03</div></div>
<div style="position:absolute;left:524px;top:49px;width:1px;height:21px;background:#d9d9d9"></div>
<div style="position:absolute;left:584px;top:49px;width:1px;height:21px;background:#d9d9d9"></div>
<div style="position:absolute;left:681px;top:49px;width:1px;height:21px;background:#d9d9d9"></div>
<div style="position:absolute;left:752px;top:49px;width:1px;height:21px;background:#d9d9d9"></div>
<div style="position:absolute;left:754.5px;top:52.0px;width:77px;height:16px;overflow:hidden"><div class="t" style="left:0;top:0;font-size:12px;color:#2e2e2e;transform:scaleX(0.8850);transform-origin:0 0;">21.01.01.</div></div>
<div style="position:absolute;left:832px;top:49px;width:1px;height:21px;background:#d9d9d9"></div>
<div style="position:absolute;left:834.5px;top:52.0px;width:87px;height:16px;overflow:hidden"><div class="t" style="left:0;top:0;font-size:12px;color:#2e2e2e;transform:scaleX(0.8850);transform-origin:0 0;">21.01.03.</div></div>
<div style="position:absolute;left:922px;top:49px;width:1px;height:21px;background:#d9d9d9"></div>
<div style="position:absolute;left:924.5px;top:52.0px;width:117px;height:16px;overflow:hidden"><div class="t" style="left:0;top:0;font-size:12px;color:#2e2e2e;transform:scaleX(0.9444);transform-origin:0 0;">Időszaki elszámolás</div></div>
<div style="position:absolute;left:1042px;top:49px;width:1px;height:21px;background:#d9d9d9"></div>
<div style="position:absolute;left:1044.5px;top:52.0px;width:105px;height:16px;overflow:hidden"><div class="t" style="left:0;top:0;font-size:12px;color:#2e2e2e;transform:scaleX(0.8850);transform-origin:0 0;">21.01.03.</div></div>
<div style="position:absolute;left:1150px;top:49px;width:1px;height:21px;background:#d9d9d9"></div>
<div style="position:absolute;left:1152.5px;top:52.0px;width:94px;height:16px;overflow:hidden"><div class="t" style="left:0;top:0;font-size:12px;color:#2e2e2e;transform:scaleX(0.8850);transform-origin:0 0;">20.12.31.</div></div>
<div style="position:absolute;left:1247px;top:49px;width:1px;height:21px;background:#d9d9d9"></div>
<div style="position:absolute;left:1249.5px;top:52.0px;width:83px;height:16px;overflow:hidden"><div class="t" style="left:0;top:0;font-size:12px;color:#2e2e2e;transform:scaleX(0.8850);transform-origin:0 0;">21.01.03.</div></div>
<div style="position:absolute;left:0px;top:90px;width:1400px;height:1px;background:#d9d9d9"></div>
<div style="position:absolute;left:0px;top:70px;width:1px;height:21px;background:#d9d9d9"></div>
<div style="position:absolute;left:2.5px;top:73.0px;width:97px;height:16px;overflow:hidden"><div class="t" style="left:0;top:0;font-size:12px;color:#2e2e2e;transform:scaleX(0.9494);transform-origin:0 0;">2020-NDÚ/000427</div></div>
<div style="position:absolute;left:100px;top:70px;width:1px;height:21px;background:#d9d9d9"></div>
<div style="position:absolute;left:222px;top:70px;width:1px;height:21px;background:#d9d9d9"></div>
<div style="position:absolute;left:224.5px;top:73.0px;width:59px;height:16px;overflow:hidden"><div class="t" style="left:0;top:0;font-size:12px;color:#2e2e2e;transform:scaleX(1.0081);transform-origin:0 0;">Normál</div></div>
<div style="position:absolute;left:284px;top:70px;width:1px;height:21px;background:#d9d9d9"></div>
<div style="position:absolute;left:286.5px;top:73.0px;width:73px;height:16px;overflow:hidden"><div class="t" style="left:0;top:0;font-size:12px;color:#2e2e2e;transform:scaleX(0.9181);transform-origin:0 0;">ND123</div></div>
<div style="position:absolute;left:360px;top:70px;width:1px;height:21px;background:#d9d9d9"></div>
<div style="position:absolute;left:362.5px;top:73.0px;width:80px;height:16px;overflow:hidden"><div class="t" style="left:0;top:0;font-size:12px;color:#2e2e2e;transform:scaleX(0.9655);transform-origin:0 0;">Virág Kft</div></div>
<div style="position:absolute;left:443px;top:70px;width:1px;height:21px;background:#d9d9d9"></div>
<div style="position:absolute;left:445.5px;top:73.0px;width:78px;height:16px;overflow:hidden"><div class="t" style="left:0;top:0;font-size:12px;color:#2e2e2e;transform:scaleX(0.9404);transform-origin:0 0;">11026125-2-03</div></div>
<div style="position:absolute;left:524px;top:70px;width:1px;height:21px;background:#d9d9d9"></div>
<div style="position:absolute;left:584px;top:70px;width:1px;height:21px;background:#d9d9d9"></div>
<div style="position:absolute;left:681px;top:70px;width:1px;height:21px;background:#d9d9d9"></div>
<div style="position:absolute;left:752px;top:70px;width:1px;height:21px;background:#d9d9d9"></div>
<div style="position:absolute;left:754.5px;top:73.0px;width:77px;height:16px;overflow:hidden"><div class="t" style="left:0;top:0;font-size:12px;color:#2e2e2e;transform:scaleX(0.8850);transform-origin:0 0;">21.01.01.</div></div>
<div style="position:absolute;left:832px;top:70px;width:1px;height:21px;background:#d9d9d9"></div>
<div style="position:absolute;left:834.5px;top:73.0px;width:87px;height:16px;overflow:hidden"><div class="t" style="left:0;top:0;font-size:12px;color:#2e2e2e;transform:scaleX(0.8850);transform-origin:0 0;">21.01.03.</div></div>
<div style="position:absolute;left:922px;top:70px;width:1px;height:21px;background:#d9d9d9"></div>
<div style="position:absolute;left:924.5px;top:73.0px;width:117px;height:16px;overflow:hidden"><div class="t" style="left:0;top:0;font-size:12px;color:#2e2e2e;transform:scaleX(0.9444);transform-origin:0 0;">Időszaki elszámolás</div></div>
<div style="position:absolute;left:1042px;top:70px;width:1px;height:21px;background:#d9d9d9"></div>
<div style="position:absolute;left:1044.5px;top:73.0px;width:105px;height:16px;overflow:hidden"><div class="t" style="left:0;top:0;font-size:12px;color:#2e2e2e;transform:scaleX(0.8850);transform-origin:0 0;">21.01.03.</div></div>
<div style="position:absolute;left:1150px;top:70px;width:1px;height:21px;background:#d9d9d9"></div>
<div style="position:absolute;left:1152.5px;top:73.0px;width:94px;height:16px;overflow:hidden"><div class="t" style="left:0;top:0;font-size:12px;color:#2e2e2e;transform:scaleX(0.8850);transform-origin:0 0;">20.12.31.</div></div>
<div style="position:absolute;left:1247px;top:70px;width:1px;height:21px;background:#d9d9d9"></div>
<div style="position:absolute;left:1249.5px;top:73.0px;width:83px;height:16px;overflow:hidden"><div class="t" style="left:0;top:0;font-size:12px;color:#2e2e2e;transform:scaleX(0.8850);transform-origin:0 0;">21.01.03.</div></div>
<div style="position:absolute;left:0px;top:111px;width:1400px;height:1px;background:#d9d9d9"></div>
<div style="position:absolute;left:0px;top:91px;width:1px;height:21px;background:#d9d9d9"></div>
<div style="position:absolute;left:2.5px;top:94.0px;width:97px;height:16px;overflow:hidden"><div class="t" style="left:0;top:0;font-size:12px;color:#2e2e2e;transform:scaleX(0.9494);transform-origin:0 0;">2020-NDÚ/000475</div></div>
<div style="position:absolute;left:100px;top:91px;width:1px;height:21px;background:#d9d9d9"></div>
<div style="position:absolute;left:222px;top:91px;width:1px;height:21px;background:#d9d9d9"></div>
<div style="position:absolute;left:224.5px;top:94.0px;width:59px;height:16px;overflow:hidden"><div class="t" style="left:0;top:0;font-size:12px;color:#2e2e2e;transform:scaleX(1.0081);transform-origin:0 0;">Normál</div></div>
<div style="position:absolute;left:284px;top:91px;width:1px;height:21px;background:#d9d9d9"></div>
<div style="position:absolute;left:286.5px;top:94.0px;width:73px;height:16px;overflow:hidden"><div class="t" style="left:0;top:0;font-size:12px;color:#2e2e2e;transform:scaleX(1.0021);transform-origin:0 0;">NDM</div></div>
<div style="position:absolute;left:360px;top:91px;width:1px;height:21px;background:#d9d9d9"></div>
<div style="position:absolute;left:362.5px;top:94.0px;width:80px;height:16px;overflow:hidden"><div class="t" style="left:0;top:0;font-size:12px;color:#2e2e2e;transform:scaleX(1.0057);transform-origin:0 0;">MÁgánszemély</div></div>
<div style="position:absolute;left:443px;top:91px;width:1px;height:21px;background:#d9d9d9"></div>
<div style="position:absolute;left:524px;top:91px;width:1px;height:21px;background:#d9d9d9"></div>
<div style="position:absolute;left:584px;top:91px;width:1px;height:21px;background:#d9d9d9"></div>
<div style="position:absolute;left:681px;top:91px;width:1px;height:21px;background:#d9d9d9"></div>
<div style="position:absolute;left:752px;top:91px;width:1px;height:21px;background:#d9d9d9"></div>
<div style="position:absolute;left:754.5px;top:94.0px;width:77px;height:16px;overflow:hidden"><div class="t" style="left:0;top:0;font-size:12px;color:#2e2e2e;transform:scaleX(0.8850);transform-origin:0 0;">21.01.05.</div></div>
<div style="position:absolute;left:832px;top:91px;width:1px;height:21px;background:#d9d9d9"></div>
<div style="position:absolute;left:834.5px;top:94.0px;width:87px;height:16px;overflow:hidden"><div class="t" style="left:0;top:0;font-size:12px;color:#2e2e2e;transform:scaleX(0.8850);transform-origin:0 0;">21.01.07.</div></div>
<div style="position:absolute;left:922px;top:91px;width:1px;height:21px;background:#d9d9d9"></div>
<div style="position:absolute;left:924.5px;top:94.0px;width:117px;height:16px;overflow:hidden"><div class="t" style="left:0;top:0;font-size:12px;color:#2e2e2e;transform:scaleX(0.9444);transform-origin:0 0;">Időszaki elszámolás</div></div>
<div style="position:absolute;left:1042px;top:91px;width:1px;height:21px;background:#d9d9d9"></div>
<div style="position:absolute;left:1044.5px;top:94.0px;width:105px;height:16px;overflow:hidden"><div class="t" style="left:0;top:0;font-size:12px;color:#2e2e2e;transform:scaleX(0.8850);transform-origin:0 0;">21.01.07.</div></div>
<div style="position:absolute;left:1150px;top:91px;width:1px;height:21px;background:#d9d9d9"></div>
<div style="position:absolute;left:1152.5px;top:94.0px;width:94px;height:16px;overflow:hidden"><div class="t" style="left:0;top:0;font-size:12px;color:#2e2e2e;transform:scaleX(0.8850);transform-origin:0 0;">20.12.31.</div></div>
<div style="position:absolute;left:1247px;top:91px;width:1px;height:21px;background:#d9d9d9"></div>
<div style="position:absolute;left:1249.5px;top:94.0px;width:83px;height:16px;overflow:hidden"><div class="t" style="left:0;top:0;font-size:12px;color:#2e2e2e;transform:scaleX(0.8850);transform-origin:0 0;">21.01.07.</div></div>
<div style="position:absolute;left:0px;top:132px;width:1400px;height:1px;background:#d9d9d9"></div>
<div style="position:absolute;left:0px;top:112px;width:1px;height:21px;background:#d9d9d9"></div>
<div style="position:absolute;left:2.5px;top:115.0px;width:97px;height:16px;overflow:hidden"><div class="t" style="left:0;top:0;font-size:12px;color:#2e2e2e;transform:scaleX(0.9494);transform-origin:0 0;">2020-NDÚ/000426</div></div>
<div style="position:absolute;left:100px;top:112px;width:1px;height:21px;background:#d9d9d9"></div>
<div style="position:absolute;left:102.5px;top:115.0px;width:119px;height:16px;overflow:hidden"><div class="t" style="left:0;top:0;font-size:12px;color:#2e2e2e;">4</div></div>
<div style="position:absolute;left:222px;top:112px;width:1px;height:21px;background:#d9d9d9"></div>
<div style="position:absolute;left:224.5px;top:115.0px;width:59px;height:16px;overflow:hidden"><div class="t" style="left:0;top:0;font-size:12px;color:#2e2e2e;transform:scaleX(1.0081);transform-origin:0 0;">Normál</div></div>
<div style="position:absolute;left:284px;top:112px;width:1px;height:21px;background:#d9d9d9"></div>
<div style="position:absolute;left:286.5px;top:115.0px;width:73px;height:16px;overflow:hidden"><div class="t" style="left:0;top:0;font-size:12px;color:#2e2e2e;transform:scaleX(0.9181);transform-origin:0 0;">ND123</div></div>
<div style="position:absolute;left:360px;top:112px;width:1px;height:21px;background:#d9d9d9"></div>
<div style="position:absolute;left:362.5px;top:115.0px;width:80px;height:16px;overflow:hidden"><div class="t" style="left:0;top:0;font-size:12px;color:#2e2e2e;transform:scaleX(0.9655);transform-origin:0 0;">Virág Kft</div></div>
<div style="position:absolute;left:443px;top:112px;width:1px;height:21px;background:#d9d9d9"></div>
<div style="position:absolute;left:445.5px;top:115.0px;width:78px;height:16px;overflow:hidden"><div class="t" style="left:0;top:0;font-size:12px;color:#2e2e2e;transform:scaleX(0.9404);transform-origin:0 0;">11026125-2-03</div></div>
<div style="position:absolute;left:524px;top:112px;width:1px;height:21px;background:#d9d9d9"></div>
<div style="position:absolute;left:584px;top:112px;width:1px;height:21px;background:#d9d9d9"></div>
<div style="position:absolute;left:681px;top:112px;width:1px;height:21px;background:#d9d9d9"></div>
<div style="position:absolute;left:752px;top:112px;width:1px;height:21px;background:#d9d9d9"></div>
<div style="position:absolute;left:754.5px;top:115.0px;width:77px;height:16px;overflow:hidden"><div class="t" style="left:0;top:0;font-size:12px;color:#2e2e2e;transform:scaleX(0.8850);transform-origin:0 0;">21.01.01.</div></div>
<div style="position:absolute;left:832px;top:112px;width:1px;height:21px;background:#d9d9d9"></div>
<div style="position:absolute;left:834.5px;top:115.0px;width:87px;height:16px;overflow:hidden"><div class="t" style="left:0;top:0;font-size:12px;color:#2e2e2e;transform:scaleX(0.8850);transform-origin:0 0;">21.01.01.</div></div>
<div style="position:absolute;left:922px;top:112px;width:1px;height:21px;background:#d9d9d9"></div>
<div style="position:absolute;left:924.5px;top:115.0px;width:117px;height:16px;overflow:hidden"><div class="t" style="left:0;top:0;font-size:12px;color:#2e2e2e;transform:scaleX(0.9759);transform-origin:0 0;">Átutalás</div></div>
<div style="position:absolute;left:1042px;top:112px;width:1px;height:21px;background:#d9d9d9"></div>
<div style="position:absolute;left:1044.5px;top:115.0px;width:105px;height:16px;overflow:hidden"><div class="t" style="left:0;top:0;font-size:12px;color:#2e2e2e;transform:scaleX(0.8850);transform-origin:0 0;">21.01.15.</div></div>
<div style="position:absolute;left:1150px;top:112px;width:1px;height:21px;background:#d9d9d9"></div>
<div style="position:absolute;left:1152.5px;top:115.0px;width:94px;height:16px;overflow:hidden"><div class="t" style="left:0;top:0;font-size:12px;color:#2e2e2e;transform:scaleX(0.8850);transform-origin:0 0;">20.12.31.</div></div>
<div style="position:absolute;left:1247px;top:112px;width:1px;height:21px;background:#d9d9d9"></div>
<div style="position:absolute;left:1249.5px;top:115.0px;width:83px;height:16px;overflow:hidden"><div class="t" style="left:0;top:0;font-size:12px;color:#2e2e2e;transform:scaleX(0.8850);transform-origin:0 0;">21.01.15.</div></div>
<div style="position:absolute;left:77px;top:29px;width:22px;height:18px;background:#fff"></div>
<svg style="position:absolute;left:82px;top:26px;" width="15" height="18" viewBox="0 0 15 18"><g transform="translate(7.4,11.1) rotate(44) scale(1.1)"><path d="M3 -1V5A3 3 0 0 1 -3 5V-4.8A2 2 0 0 1 1 -4.8V3.8A1 1 0 0 1 -1 3.8V-3" fill="none" stroke="#3592d8" stroke-width="0.95"/></g></svg>
<svg style="position:absolute;left:342px;top:26px;" width="15" height="18" viewBox="0 0 15 18"><g transform="translate(7.4,11.1) rotate(44) scale(1.1)"><path d="M3 -1V5A3 3 0 0 1 -3 5V-4.8A2 2 0 0 1 1 -4.8V3.8A1 1 0 0 1 -1 3.8V-3" fill="none" stroke="#3592d8" stroke-width="0.95"/></g></svg>
<svg style="position:absolute;left:425px;top:26px;" width="15" height="18" viewBox="0 0 15 18"><g transform="translate(7.4,11.1) rotate(44) scale(1.1)"><path d="M3 -1V5A3 3 0 0 1 -3 5V-4.8A2 2 0 0 1 1 -4.8V3.8A1 1 0 0 1 -1 3.8V-3" fill="none" stroke="#3592d8" stroke-width="0.95"/></g></svg>
<svg style="position:absolute;left:566px;top:26px;" width="15" height="18" viewBox="0 0 15 18"><g transform="translate(7.4,11.1) rotate(44) scale(1.1)"><path d="M3 -1V5A3 3 0 0 1 -3 5V-4.8A2 2 0 0 1 1 -4.8V3.8A1 1 0 0 1 -1 3.8V-3" fill="none" stroke="#3592d8" stroke-width="0.95"/></g></svg>
<svg style="position:absolute;left:663px;top:26px;" width="15" height="18" viewBox="0 0 15 18"><g transform="translate(7.4,11.1) rotate(44) scale(1.1)"><path d="M3 -1V5A3 3 0 0 1 -3 5V-4.8A2 2 0 0 1 1 -4.8V3.8A1 1 0 0 1 -1 3.8V-3" fill="none" stroke="#3592d8" stroke-width="0.95"/></g></svg>
<div style="position:absolute;left:0px;top:28px;width:100px;height:20px;border:1px dotted #222;box-sizing:border-box"></div>
<svg style="position:absolute;left:819px;top:37px;" width="6" height="3" viewBox="0 0 6 3"><path d="M0 0H6L3 3Z" fill="#777"/></svg>
<svg style="position:absolute;left:909px;top:37px;" width="6" height="3" viewBox="0 0 6 3"><path d="M0 0H6L3 3Z" fill="#777"/></svg>
<svg style="position:absolute;left:1137px;top:37px;" width="6" height="3" viewBox="0 0 6 3"><path d="M0 0H6L3 3Z" fill="#777"/></svg>
<svg style="position:absolute;left:1234px;top:37px;" width="6" height="3" viewBox="0 0 6 3"><path d="M0 0H6L3 3Z" fill="#777"/></svg>
</div>
<div style="position:absolute;left:7px;top:702px;width:1271px;height:1px;background:#d5d5d5"></div>
<div style="position:absolute;left:10px;top:705px;width:96px;height:34px;background:#efefef"></div>
<div class="t" style="left:16.5px;top:715.0px;font-size:12px;color:#333;">5</div>
<div style="position:absolute;left:7px;top:742px;width:1271px;height:17px;background:#f0f0f0"></div>
<div style="position:absolute;left:7px;top:742px;width:17px;height:17px;background:#fff;border:1px solid #aaa;box-sizing:border-box"></div>
<svg style="position:absolute;left:14px;top:747px;" width="4" height="7" viewBox="0 0 4 7"><path d="M4 0V7L0 3.5Z" fill="#8a8a8a"/></svg>
<div style="position:absolute;left:24px;top:742px;width:519px;height:17px;background:#fff;border:1px solid #aaa;box-sizing:border-box"></div>
<div style="position:absolute;left:1260px;top:742px;width:17px;height:17px;background:#fff;border:1px solid #aaa;box-sizing:border-box"></div>
<svg style="position:absolute;left:1267px;top:747px;" width="4" height="7" viewBox="0 0 4 7"><path d="M0 0V7L4 3.5Z" fill="#8a8a8a"/></svg>
<div style="position:absolute;left:1px;top:760px;width:1282px;height:22px;background:#dedede"></div>
<div style="position:absolute;left:2px;top:761px;width:190px;height:20px;background:#dedede;border:1px solid #c2c2c2;box-sizing:border-box"></div>
<svg style="position:absolute;left:4px;top:763px;" width="17" height="16" viewBox="0 0 17 16"><rect x="0.5" y="0.5" width="10" height="3" fill="#fbd39b" stroke="#f29b1d"/><rect x="4.5" y="6.5" width="11" height="3" fill="#a6dcae" stroke="#34a853"/><rect x="4.5" y="12" width="11" height="3" fill="#f7b0b0" stroke="#e53935"/><path d="M1.5 4V13.5H4.5M1.5 8H4.5" fill="none" stroke="#1f6dc0"/></svg>
<div class="t" style="left:23px;top:764.0px;font-size:12px;color:#222;transform:scaleX(0.9995);transform-origin:0 0;">Menü</div>
<svg style="position:absolute;left:169px;top:763px;" width="15" height="15" viewBox="0 0 15 15"><circle cx="7.5" cy="7.5" r="6.9" fill="none" stroke="#ee9a9a" stroke-width="1.2"/><path d="M4 4L11 11M11 4L4 11" stroke="#ee9a9a" stroke-width="1.2"/></svg>
<div style="position:absolute;left:194px;top:761px;width:190px;height:20px;background:#cce4f7;border:1px solid #1f64b4;box-sizing:border-box"></div>
<svg style="position:absolute;left:196px;top:763px;" width="16" height="17" viewBox="0 0 16 17"><rect x="0.5" y="2.5" width="15" height="13" fill="#fff"/><path d="M0.6 4V15.4H3M15.4 4V15.4H13" fill="none" stroke="#333" stroke-width="1.1"/><rect x="0.6" y="0.6" width="14.8" height="3.2" fill="#a7d1f3" stroke="#1a5fb0" stroke-width="1.1"/><path d="M8 6V16M4 12L8 16L12 12" fill="none" stroke="#f08a24" stroke-width="1.1"/></svg>
<div class="t" style="left:215.2px;top:764.0px;font-size:12px;color:#222;transform:scaleX(0.9208);transform-origin:0 0;">Számlaösszesítő lekérdezés</div>
<svg style="position:absolute;left:361px;top:763px;" width="15" height="15" viewBox="0 0 15 15"><circle cx="7.5" cy="7.5" r="6.9" fill="none" stroke="#ee9a9a" stroke-width="1.2"/><path d="M4 4L11 11M11 4L4 11" stroke="#ee9a9a" stroke-width="1.2"/></svg>
<div style="position:absolute;left:1px;top:782px;width:1282px;height:23px;background:#f0f0f0"></div>
<div class="t" style="left:7px;top:787.0px;font-size:12px;color:#222;transform:scaleX(0.8498);transform-origin:0 0;">sERPa_3_112</div>
<div class="t" style="left:80px;top:787.0px;font-size:12px;color:#222;transform:scaleX(0.8618);transform-origin:0 0;">2021</div>
<div class="t" style="left:112px;top:787.0px;font-size:12px;color:#222;transform:scaleX(0.9554);transform-origin:0 0;">szabo.bence</div>
<div class="t" style="left:184.5px;top:787.0px;font-size:12px;color:#222;transform:scaleX(0.9104);transform-origin:0 0;">v 3.0.112.24698 (2021.02.08.)</div>
<div style="position:absolute;left:1276px;top:789px;width:2px;height:2px;background:#8a8a8a"></div>
<div style="position:absolute;left:1272px;top:793px;width:2px;height:2px;background:#8a8a8a"></div>
<div style="position:absolute;left:1276px;top:793px;width:2px;height:2px;background:#8a8a8a"></div>
<div style="position:absolute;left:1268px;top:797px;width:2px;height:2px;background:#8a8a8a"></div>
<div style="position:absolute;left:1272px;top:797px;width:2px;height:2px;background:#8a8a8a"></div>
<div style="position:absolute;left:1276px;top:797px;width:2px;height:2px;background:#8a8a8a"></div>
</body></html>
